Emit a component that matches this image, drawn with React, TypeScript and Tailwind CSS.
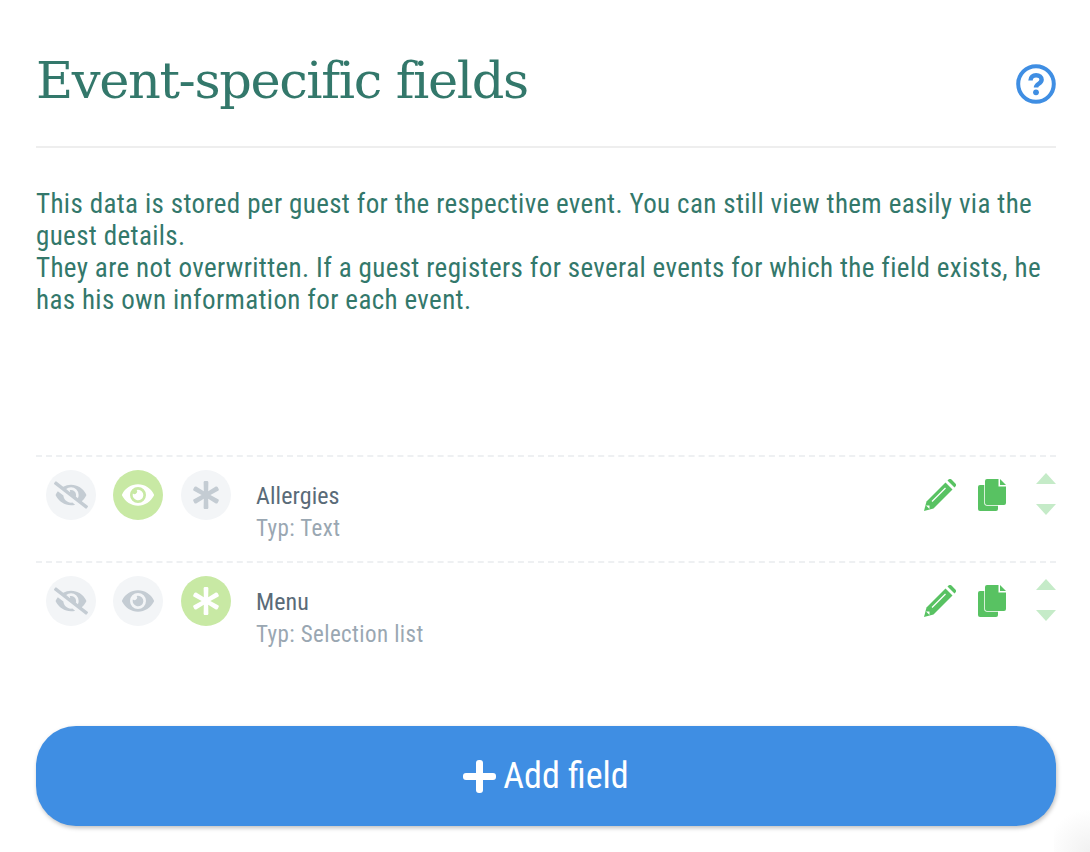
import { FaAsterisk, FaEye, FaEyeSlash } from 'react-icons/fa';

const FIELDS = [
  { name: 'Allergies', type: 'Typ: Text', visible: true, required: false },
  { name: 'Menu', type: 'Typ: Selection list', visible: false, required: true },
];

function RoundIcon({ active, children }: { active?: boolean; children: React.ReactNode }) {
  return (
    <div className={active
      ? 'w-[50px] h-[50px] rounded-full flex items-center justify-center bg-[#c8e9a4] text-white'
      : 'w-[50px] h-[50px] rounded-full flex items-center justify-center bg-[#f3f5f7] text-[#c4ccd3]'}>
      {children}
    </div>
  );
}

function HelpIcon() {
  return (
    <svg width="40" height="40" viewBox="0 0 40 40" fill="none">
      <circle cx="20" cy="20" r="17.800" stroke="#3f8ee3" strokeWidth="4" />
      <path d="M14.500 16.500c0-3.200 2.400-5.200 5.600-5.200s5.500 1.900 5.500 4.500c0 4-5.600 3.900-5.600 7.700" stroke="#3f8ee3" strokeWidth="4.500" />
      <circle cx="20" cy="28.300" r="2.900" fill="#3f8ee3" />
    </svg>
  );
}

function PencilIcon() {
  return (
    <svg width="32" height="32" viewBox="0 0 32 32" className="mt-[1px]">
      <path d="M21.500 3.500L28.500 10.500L9.500 29.500L0 32L2.500 22.500Z" fill="currentColor" />
      <path d="M23.500 1.500L24.500 .6a2.200 2.200 0 0 1 3 0L31.400 4.500a2.200 2.200 0 0 1 0 3L30.500 8.500Z" fill="currentColor" />
      <path d="M8 22.500L21.500 9" stroke="white" strokeWidth="1.300" />
      <path d="M2 26.500L5.500 26.500L5.500 30Z" fill="white" />
    </svg>
  );
}

function CopyIcon() {
  return (
    <svg width="28" height="32" viewBox="0 0 28 32" className="mt-[1px]">
      <rect x="0" y="6" width="20" height="26" rx="2" fill="currentColor" />
      <path d="M9 0H20.500V7.500H28V24a2 2 0 0 1-2 2H9a2 2 0 0 1-2-2V2a2 2 0 0 1 2-2Z" fill="currentColor" stroke="white" strokeWidth="1.500" paintOrder="stroke" />
      <path d="M22 0L28 6H22Z" fill="currentColor" />
    </svg>
  );
}

function Row({ name, type, visible, required }: { name: string; type: string; visible: boolean; required: boolean }) {
  return (
    <div className="h-[106px] flex border-t-2 border-dashed border-[#eef0f2] pl-[10px]">
      <div className="flex gap-[17px] pt-[13px]">
        <RoundIcon><FaEyeSlash size={34} /></RoundIcon>
        <RoundIcon active={visible}><FaEye size={32} /></RoundIcon>
        <div className="ml-[1px]"><RoundIcon active={required}><FaAsterisk size={28} /></RoundIcon></div>
      </div>
      <div className="ml-[25px] pt-[23px]">
        <div className="text-[24px] leading-[32px] tracking-[0.1px] text-[#5a6b78]">{name}</div>
        <div className="mt-[2px] text-[23px] leading-[30px] tracking-[0.4px] text-[#9aa7b2]">{type}</div>
      </div>
      <div className="ml-auto flex pt-[21px] text-[#58c262]">
        <PencilIcon />
        <div className="ml-[22px]"><CopyIcon /></div>
        <div className="ml-[30px] w-[20px] flex flex-col gap-[20px] -mt-[5px] text-[#c5ebc8]">
          <svg width="20" height="11" viewBox="0 0 20 11" fill="currentColor"><path d="M10 0l10 11H0z" /></svg>
          <svg width="20" height="11" viewBox="0 0 20 11" fill="currentColor"><path d="M10 11L20 0H0z" /></svg>
        </div>
      </div>
    </div>
  );
}

export default function App() {
  return (
    <div className="relative w-[1090px] h-[852px] overflow-hidden bg-white pl-[36px] pr-[34px] font-['Roboto',sans-serif] font-stretch-condensed">
      <div className="h-[148px] flex justify-between border-b-2 border-[#eeeeee]">
        <h1 className="mt-[47px] text-[51px] leading-[68px] tracking-[-1.4px] text-[#33786b] font-['DejaVu_Serif',serif] font-stretch-normal">Event-specific fields</h1>
        <div className="mt-[64px]"><HelpIcon /></div>
      </div>
      <p className="mt-[40px] text-[27px] leading-[32px] tracking-[0.37px] text-[#33786b]">
        This data is stored per guest for the respective event. You can still view them easily via the guest details.<br />
        They are not overwritten. If a guest registers for several events for which the field exists, he has his own information for each event.
      </p>
      <div className="mt-[139px]">
        {FIELDS.map((f) => <Row key={f.name} {...f} />)}
      </div>
      <button className="mt-[59px] w-full h-[100px] rounded-[40px] bg-[#3f8ee3] text-white text-[36px] flex items-center justify-center gap-[7px] shadow-[1px_2px_4px_rgba(0,0,0,0.25)]">
        <svg width="33" height="33" viewBox="0 0 33 33" fill="white"><rect x="13" y="0" width="7" height="33" rx="3" /><rect x="0" y="13" width="33" height="7" rx="3" /></svg>
        Add field
      </button>
      <div className="absolute right-0 bottom-0 w-[36px] h-[50px] bg-[radial-gradient(circle_at_100%_100%,#f1f1f1,transparent_70%)]" />
    </div>
  );
}
